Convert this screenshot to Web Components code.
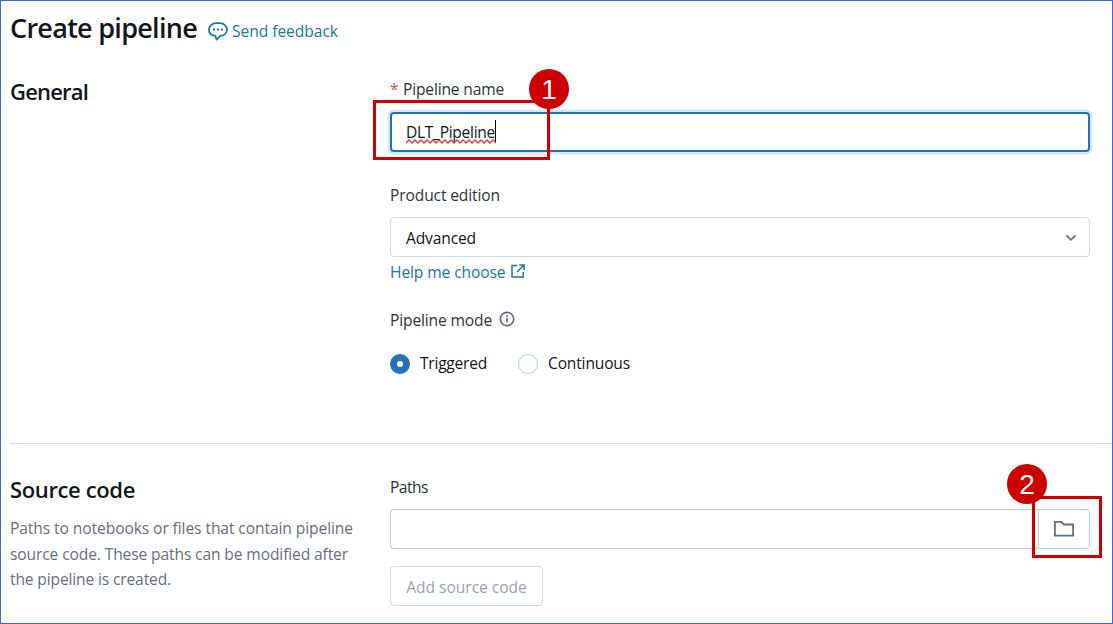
<!DOCTYPE html>
<html lang="en">
<head>
<meta charset="utf-8">
<title>Create pipeline</title>
<style>
html,body{margin:0;height:100%;background:#fff;overflow:hidden}
body{font:15.6px/24px "Open Sans","Noto Sans",sans-serif;color:#11171c}
</style>
</head>
<body>
<pipeline-page></pipeline-page>
<script>
const define = (name, html, after) => customElements.define(name, class extends HTMLElement {
  connectedCallback() {
    if (this.shadowRoot) return;
    const t = document.createElement('template');
    t.innerHTML = html;
    this.attachShadow({ mode: 'open' }).append(t.content.cloneNode(true));
    if (after) after(this, this.shadowRoot);
  }
});

/* One line of text, tracked so that it fills the given width. */
define('text-line', `<style>
:host{display:block;white-space:nowrap;flex:none}
span{display:inline-block}
</style><span><slot></slot></span>`, (el, root) => {
  const span = root.querySelector('span'), w = +el.getAttribute('w');
  if (!w) return;
  const n = el.textContent.length;
  span.style.letterSpacing = (w - span.getBoundingClientRect().width) / n + 'px';
});

define('ui-icon', `<style>:host{display:block;flex:none}svg{display:block;fill:none;stroke:currentColor}</style><div></div>`, (el, root) => {
  const icons = {
    chat: '<svg width="20" height="20" viewBox="0 0 20 20" stroke-width="1.8"><path d="M7.3 13.8C3.6 13.4 1 11 1 7.7 1 4 4 1.2 8 1.2h4c4 0 7 2.8 7 6.4s-2.9 6.3-6.8 6.3L8.5 17.6z" stroke-linejoin="round"/><path d="M5.1 6.6h2v2h-2zM9 6.6h2v2H9zM12.9 6.6h2v2h-2z" fill="currentColor" stroke="none"/></svg>',
    external: '<svg width="14" height="14" viewBox="0 0 14 14" stroke-width="1.5"><path d="M6 1.6H1v11.3h11.2V8M8.2 1h4.9v4.9M13 1 6 8"/></svg>',
    info: '<svg width="16" height="16" viewBox="0 0 16 16" stroke-width="1.7"><circle cx="8" cy="8" r="6.7"/><path d="M8 7.1v4.2M8 4.3v1.8"/></svg>',
    chevron: '<svg width="12" height="8" viewBox="0 0 12 8" stroke-width="1.8"><path d="m1.5 1.4 4.5 4.4 4.5-4.4"/></svg>',
    folder: '<svg width="20" height="16" viewBox="0 0 20 16" stroke-width="1.8"><path d="M.9.9h6.3l2.6 2.6h9.3v11.1H.9z"/></svg>'
  };
  root.querySelector('div').innerHTML = icons[el.getAttribute('name')];
});

define('form-section', `<style>
:host{display:grid;grid-template-columns:380px 700px;box-sizing:border-box;align-items:start}
h2{margin:0;font-size:22px;line-height:28px;font-weight:600}
.desc{color:#5f7281;line-height:25.5px;margin-top:13px}
</style><div><h2><slot name="title"></slot></h2><div class="desc"><slot name="desc"></slot></div></div><div><slot></slot></div>`);

define('text-field', `<style>
:host{display:flex;box-sizing:border-box;height:40px;border:1px solid #c0cdd8;border-radius:4px;padding:1px 0 0 15px;align-items:center}
:host([focused]){border:2px solid #2272b4;padding:0 0 0 14px;box-shadow:0 0 0 2.5px #d8e5f1}
:host([select]){justify-content:space-between;padding-right:12px;border-color:#d1d9e1}
:host([joined]){flex:1;border-radius:4px 0 0 4px;border-right:0}
</style><slot></slot>`);

define('spelled-text', `<style>
:host{display:flex;position:relative;align-items:center}
svg{position:absolute;left:0;top:19px}
i{width:1px;height:22px;background:#000;margin-top:-2px}
</style><slot></slot><svg width="90" height="5" fill="none" stroke="#ef3340" stroke-width="1.3"><path/></svg><i></i>`, (el, root) => {
  let d = 'M0 4';
  for (let x = 3, k = 0; x <= 90; x += 3, k++) d += `L${x} ${k % 2 ? 4 : 1}`;
  root.querySelector('path').setAttribute('d', d);
});

define('radio-option', `<style>
:host{display:flex;align-items:center;gap:10px}
b{box-sizing:border-box;width:20px;height:20px;border:1px solid #c0cdd8;border-radius:50%;position:relative;top:1px}
:host([checked]) b{border:7.5px solid #2272b4;background:#fff}
</style><b></b><slot></slot>`);

define('plain-button', `<style>
:host{display:flex;box-sizing:border-box;height:40px;border:1px solid #d1d9e1;border-radius:4px;align-items:center;justify-content:center;color:#92a4b3;width:153px;padding-top:1px}
:host([icon]){width:52px;border-color:#c0cdd8;border-radius:0 4px 4px 0;color:#5f7281;padding:0}
</style><slot></slot>`);

define('callout-box', `<style>
:host{display:block;position:absolute;box-sizing:border-box;border:3px solid #c00;pointer-events:none}
div{position:absolute;width:40px;height:40px;border-radius:50%;background:#c00;color:#fff;font:28px/42px "Liberation Sans",Arial,sans-serif;text-align:center;left:var(--bx);top:var(--by)}
</style><div><slot></slot></div>`);

define('pipeline-page', `<style>
:host{display:block;position:relative;box-sizing:border-box;width:1113px;height:624px;border:1px solid #4262ee;padding-left:9px;overflow:hidden}
header{display:flex;height:76px;box-sizing:border-box;padding-top:9px;align-items:flex-start}
h1{margin:0;font-size:27px;line-height:36px;font-weight:600;width:198px}
.link{display:flex;color:#2272b4}
.fb{padding-top:9px;gap:4px}
.fb ui-icon{margin-top:3px}
.label{display:flex;color:#2d3439}
.req{color:#e5484d;width:13px;box-sizing:border-box}
.general{height:367px;border-bottom:1px solid #d1dbe3}
.source{padding-top:31px}
.gap{margin-top:31px}
.field{margin-top:10px}
.radios{display:flex;gap:31px;margin-top:19px}
.row{display:flex;margin-top:10px}
.helplink{margin-top:3px;gap:5.5px}
.helplink ui-icon{margin-top:4px}
.mode{margin-top:24px;gap:7px}
.mode ui-icon{color:#5f7281;margin-top:3px}
plain-button.add{margin-top:17px}
</style>
<header><h1><text-line w="187">Create pipeline</text-line></h1><div class="link fb"><ui-icon name="chat"></ui-icon><text-line w="106">Send feedback</text-line></div></header>
<form-section class="general">
 <text-line slot="title" w="78">General</text-line>
 <div class="label"><span class="req">*</span><text-line w="101">Pipeline name</text-line></div>
 <text-field focused style="margin-top:11px"><spelled-text><text-line w="89">DLT_Pipeline</text-line></spelled-text></text-field>
 <div class="label gap"><text-line w="110">Product edition</text-line></div>
 <text-field select class="field"><text-line w="70">Advanced</text-line><ui-icon name="chevron" style="color:#5f7281"></ui-icon></text-field>
 <div class="link helplink"><text-line w="115.5">Help me choose</text-line><ui-icon name="external"></ui-icon></div>
 <div class="label mode"><text-line w="102">Pipeline mode</text-line><ui-icon name="info"></ui-icon></div>
 <div class="radios"><radio-option checked><text-line w="67">Triggered</text-line></radio-option><radio-option><text-line w="82">Continuous</text-line></radio-option></div>
</form-section>
<form-section class="source">
 <text-line slot="title" w="125">Source code</text-line>
 <div slot="desc"><text-line w="343">Paths to notebooks or files that contain pipeline</text-line><text-line w="338">source code. These paths can be modified after</text-line><text-line w="161">the pipeline is created.</text-line></div>
 <div class="label"><text-line w="38">Paths</text-line></div>
 <div class="row"><text-field joined></text-field><plain-button icon><ui-icon name="folder"></ui-icon></plain-button></div>
 <plain-button class="add"><text-line w="120.5">Add source code</text-line></plain-button>
</form-section>
<callout-box style="left:372px;top:99px;width:177px;height:60px;--bx:153px;--by:-34px">1</callout-box>
<callout-box style="left:1031px;top:495px;width:70px;height:62px;--bx:-28px;--by:-35px">2</callout-box>`);
</script>
</body>
</html>
